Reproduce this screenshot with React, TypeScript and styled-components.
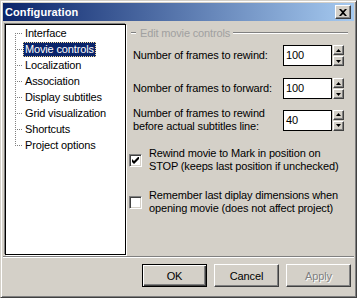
import React from 'react';
import styled, { createGlobalStyle } from 'styled-components';

const Global = createGlobalStyle`
  html, body { margin: 0; padding: 0; background: #D4D0C8; }
  body { font-family: "Liberation Sans", Arial, sans-serif; font-size: 11px; letter-spacing: -0.15px; color: #000; }
  * { box-sizing: border-box; }
`;

const Window = styled.div`
  width: 357px;
  height: 298px;
  background: #D4D0C8;
  border: 1px solid;
  border-color: #D4D0C8 #404040 #404040 #D4D0C8;
  box-shadow: inset 1px 1px #fff, inset -1px -1px #808080;
  padding: 2px;
  display: flex;
  flex-direction: column;
`;

const TitleBar = styled.div`
  height: 18px;
  flex: none;
  display: flex;
  align-items: center;
  justify-content: space-between;
  padding: 0 3px 0 2px;
  background: linear-gradient(to right, #0A246A, #A6CAF0);
`;

const Title = styled.span`
  color: #fff;
  font-weight: bold;
  font-size: 11px;
  letter-spacing: 0.1px;
`;

const CloseButton = styled.div`
  width: 16px;
  height: 14px;
  background: #D4D0C8;
  border: 1px solid;
  border-color: #fff #404040 #404040 #fff;
  box-shadow: inset -1px -1px #808080;
  display: flex;
  align-items: center;
  justify-content: center;
`;

const Main = styled.div`
  height: 231px;
  flex: none;
  margin-top: 3px;
  padding: 0 2px;
  display: flex;
`;

const Tree = styled.div`
  width: 121px;
  height: 100%;
  background: #fff;
  border: 1px solid #000;
  box-shadow: -1px -1px 0 #808080, 1px 1px 0 #fff;
`;

const TreeRow = styled.div<{ $last?: boolean }>`
  position: relative;
  height: 16px;
  display: flex;
  align-items: center;
  padding-left: 17px;
  &::before {
    content: "";
    position: absolute;
    left: 9px;
    top: 8px;
    width: 8px;
    height: 1px;
    background: repeating-linear-gradient(to right, #808080 0 1px, transparent 1px 2px);
  }
  &::after {
    content: "";
    display: ${p => (p.$last ? 'none' : 'block')};
    position: absolute;
    left: 9px;
    top: 8px;
    width: 1px;
    height: 16px;
    background: repeating-linear-gradient(to bottom, #808080 0 1px, transparent 1px 2px);
  }
`;

const TreeLabel = styled.span<{ $selected?: boolean }>`
  height: 15px;
  line-height: 15px;
  padding: 0 2px;
  white-space: nowrap;
  background: ${p => (p.$selected ? '#0A246A' : 'transparent')};
  color: ${p => (p.$selected ? '#fff' : '#000')};
  outline: ${p => (p.$selected ? '1px dotted #F5DB95' : 'none')};
  outline-offset: -1px;
`;

const Panel = styled.div`
  flex: 1;
  margin-left: 3px;
  display: flex;
  flex-direction: column;
`;

const GroupHeader = styled.div`
  height: 12px;
  margin-top: 3px;
  padding: 0 4px 0 2px;
  display: flex;
  align-items: center;
`;

const Etch = styled.div<{ $grow?: boolean }>`
  height: 2px;
  width: ${p => (p.$grow ? 'auto' : '5px')};
  flex: ${p => (p.$grow ? 1 : 'none')};
  border-top: 1px solid #808080;
  border-bottom: 1px solid #fff;
`;

const GroupTitle = styled.span`
  color: #A0A0A0;
  margin: 0 3px 0 4px;
  white-space: nowrap;
`;

const FieldRow = styled.div<{ $gap: number }>`
  display: flex;
  align-items: center;
  margin-top: ${p => p.$gap}px;
  padding: 0 8px 0 4px;
  min-height: 21px;
`;

const FieldLabel = styled.div`
  flex: 1;
  line-height: 13px;
`;

const Spinner = styled.div`
  display: flex;
  gap: 1px;
`;

const NumberBox = styled.div`
  width: 49px;
  height: 21px;
  background: #fff;
  border: 1px solid #000;
  padding: 0 2px;
  line-height: 19px;
`;

const SpinCol = styled.div`
  display: flex;
  flex-direction: column;
  width: 11px;
  height: 21px;
  justify-content: space-between;
`;

const SpinBtn = styled.div`
  width: 11px;
  height: 10px;
  background: #D4D0C8;
  border: 1px solid;
  border-color: #fff #404040 #404040 #fff;
  box-shadow: inset -1px -1px #808080;
  display: flex;
  align-items: center;
  justify-content: center;
`;

const CheckRow = styled.div<{ $gap: number }>`
  display: flex;
  align-items: center;
  margin-top: ${p => p.$gap}px;
`;

const CheckBox = styled.div`
  width: 13px;
  height: 13px;
  flex: none;
  background: #fff;
  border: 1px solid;
  border-color: #808080 #fff #fff #808080;
  box-shadow: inset 1px 1px #404040, inset -1px -1px #D4D0C8;
  display: flex;
  align-items: center;
  justify-content: center;
`;

const CheckText = styled.div`
  margin-left: 7px;
  line-height: 13px;
`;

const Separator = styled.div`
  flex: none;
  margin-top: 1px;
  border-top: 1px solid #808080;
  border-bottom: 1px solid #fff;
`;

const Footer = styled.div`
  display: flex;
  justify-content: flex-end;
  gap: 7px;
  padding: 6px 3px 0 0;
`;

const Button = styled.div<{ $default?: boolean; $disabled?: boolean }>`
  width: 65px;
  height: 23px;
  display: flex;
  align-items: center;
  justify-content: center;
  background: #D4D0C8;
  border: 1px solid;
  border-color: ${p => (p.$default ? '#000' : '#fff #404040 #404040 #fff')};
  box-shadow: ${p =>
    p.$default
      ? 'inset 1px 1px #fff, inset -1px -1px #404040, inset -2px -2px #808080'
      : 'inset -1px -1px #808080'};
  color: ${p => (p.$disabled ? '#808080' : '#000')};
  text-shadow: ${p => (p.$disabled ? '1px 1px 0 #fff' : 'none')};
`;

const Arrow = ({ up }: { up?: boolean }) => (
  <svg width="5" height="3" viewBox="0 0 5 3">
    <path d={up ? 'M2.5 0 L5 3 L0 3 Z' : 'M0 0 L5 0 L2.5 3 Z'} fill="#000" />
  </svg>
);

const Spin = ({ value }: { value: string }) => (
  <Spinner>
    <NumberBox>{value}</NumberBox>
    <SpinCol>
      <SpinBtn><Arrow up /></SpinBtn>
      <SpinBtn><Arrow /></SpinBtn>
    </SpinCol>
  </Spinner>
);

const items = [
  'Interface',
  'Movie controls',
  'Localization',
  'Association',
  'Display subtitles',
  'Grid visualization',
  'Shortcuts',
  'Project options',
];

export default function App() {
  return (
    <>
      <Global />
      <Window>
        <TitleBar>
          <Title>Configuration</Title>
          <CloseButton>
            <svg width="8" height="7" viewBox="0 0 8 7">
              <path d="M0 0h2l2 2 2-2h2L5 3.5 8 7H6L4 5 2 7H0l3-3.5z" fill="#000" />
            </svg>
          </CloseButton>
        </TitleBar>
        <Main>
          <Tree>
            {items.map((it, i) => (
              <TreeRow key={it} $last={i === items.length - 1}>
                <TreeLabel $selected={i === 1}>{it}</TreeLabel>
              </TreeRow>
            ))}
          </Tree>
          <Panel>
            <GroupHeader>
              <Etch />
              <GroupTitle>Edit movie controls</GroupTitle>
              <Etch $grow />
            </GroupHeader>
            <FieldRow $gap={6}>
              <FieldLabel>Number of frames to rewind:</FieldLabel>
              <Spin value="100" />
            </FieldRow>
            <FieldRow $gap={12}>
              <FieldLabel>Nomber of frames to forward:</FieldLabel>
              <Spin value="100" />
            </FieldRow>
            <FieldRow $gap={8}>
              <FieldLabel>
                Number of frames to rewind
                <br />
                before actual subtitles line:
              </FieldLabel>
              <Spin value="40" />
            </FieldRow>
            <CheckRow $gap={14}>
              <CheckBox>
                <svg width="7" height="7" viewBox="0 0 7 7">
                  <path d="M0 2v3l2 2 5-5V-1L2 4z" fill="#000" />
                </svg>
              </CheckBox>
              <CheckText>
                Rewind movie to Mark in position on
                <br />
                STOP (keeps last position if unchecked)
              </CheckText>
            </CheckRow>
            <CheckRow $gap={16}>
              <CheckBox />
              <CheckText>
                Remember last diplay dimensions when
                <br />
                opening movie (does not affect project)
              </CheckText>
            </CheckRow>
          </Panel>
        </Main>
        <Separator />
        <Footer>
          <Button $default>OK</Button>
          <Button>Cancel</Button>
          <Button $disabled>Apply</Button>
        </Footer>
      </Window>
    </>
  );
}
